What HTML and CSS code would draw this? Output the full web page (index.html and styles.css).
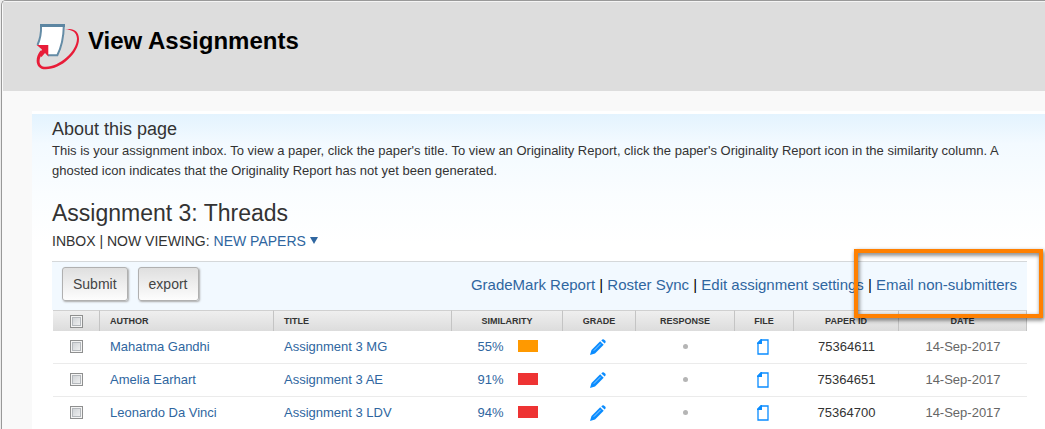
FILE: index.html
```
<!DOCTYPE html>
<html lang="en">

<head>
    <meta charset="utf-8">
    <meta name="viewport" content="width=device-width, initial-scale=1.0">
    <title>View Assignments</title>
    <link rel="stylesheet" href="styles.css">
</head>

<body>
    <svg class="sprite" aria-hidden="true">
        <symbol id="pencil" viewBox="0 0 16 16">
            <path d="M0 16l1.500-5L10.200 2.300l3.500 3.500L5 14.500z" fill="#0a8cff" />
            <path d="M3.800 11.700l7-7" stroke="#9fd3ff" stroke-width=".9" />
            <path d="M11.300 1.500Q13-.5 14.500 1Q16.800 2.500 14.700 4.500z" fill="#0a8cff" />
        </symbol>
        <symbol id="file" viewBox="0 0 12 16">
            <path d="M4 1H11V15H1V4z" fill="#fff" stroke="#0a8cff" stroke-width="1.300" />
            <path d="M0 5V4l4-4h1v5z" fill="#0a8cff" />
        </symbol>
    </svg>

    <div class="page">
        <header class="header">
            <svg class="logo" viewBox="0 0 44 46" aria-hidden="true">
                <path d="M5 1.500H28Q28 18 21.500 31.500H12L2 20.500Q5.500 12 5 1.500z" fill="#fff" />
                <path d="M1.500 21Q5.500 12 5 2H27.800Q27.500 19 21.300 31.300H12" fill="none" stroke="#648ca6" stroke-width="2" />
                <path d="M4 1.500H29" stroke="#5c86a2" stroke-width="3" />
                <path d="M29 5.500C37 3.500 43 7 43 15C43 29 25 45.500 9.500 45.300C-1 45 -1.500 34 4.500 26.500L7 28.500C2 35 2 43 10 42.800C23 42.500 41 28 41 14.500C40.500 8 36 5.500 29 5.500z" fill="#e81c38" />
                <path d="M.7 21H12.300V32.500L9 29L5.500 33L3 31L6 25.500z" fill="#e81c38" />
            </svg>
            <h1>View Assignments</h1>
        </header>

        <main class="content">
            <h3>About this page</h3>
            <p>This is your assignment inbox. To view a paper, click the paper's title. To view an Originality Report, click the paper's Originality Report icon in the similarity column. A ghosted icon indicates that the Originality Report has not yet been generated.</p>

            <h2>Assignment 3: Threads</h2>
            <div class="viewing">INBOX | NOW VIEWING: <a href="#">NEW PAPERS <span class="arrow"></span></a></div>

            <div class="inbox">
                <div class="toolbar">
                    <button type="button">Submit</button>
                    <button type="button">export</button>
                    <nav class="links">
                        <a href="#">GradeMark Report</a> | <a href="#">Roster Sync</a> | <a href="#">Edit assignment settings</a> | <a href="#">Email non-submitters</a>
                    </nav>
                    <div class="highlight"></div>
                </div>

                <table>
                    <thead>
                        <tr>
                            <th class="check"><input type="checkbox" aria-label="Select all papers"></th>
                            <th class="author">Author</th>
                            <th class="title">Title</th>
                            <th class="similarity">Similarity</th>
                            <th class="grade">Grade</th>
                            <th class="response">Response</th>
                            <th class="file">File</th>
                            <th class="paper">Paper ID</th>
                            <th class="date">Date</th>
                        </tr>
                    </thead>
                    <tbody>
                        <tr>
                            <td><input type="checkbox" aria-label="Select Mahatma Gandhi"></td>
                            <td class="left"><a href="#">Mahatma Gandhi</a></td>
                            <td class="left"><a href="#">Assignment 3 MG</a></td>
                            <td><a href="#" class="score">55% <span class="bar orange"></span></a></td>
                            <td class="icon"><a href="#" aria-label="Grade"><svg class="pencil"><use href="#pencil" /></svg></a></td>
                            <td><span class="dot"></span></td>
                            <td class="icon"><a href="#" aria-label="File"><svg class="doc"><use href="#file" /></svg></a></td>
                            <td>75364611</td>
                            <td class="grey">14-Sep-2017</td>
                        </tr>
                        <tr>
                            <td><input type="checkbox" aria-label="Select Amelia Earhart"></td>
                            <td class="left"><a href="#">Amelia Earhart</a></td>
                            <td class="left"><a href="#">Assignment 3 AE</a></td>
                            <td><a href="#" class="score">91% <span class="bar red"></span></a></td>
                            <td class="icon"><a href="#" aria-label="Grade"><svg class="pencil"><use href="#pencil" /></svg></a></td>
                            <td><span class="dot"></span></td>
                            <td class="icon"><a href="#" aria-label="File"><svg class="doc"><use href="#file" /></svg></a></td>
                            <td>75364651</td>
                            <td class="grey">14-Sep-2017</td>
                        </tr>
                        <tr>
                            <td><input type="checkbox" aria-label="Select Leonardo Da Vinci"></td>
                            <td class="left"><a href="#">Leonardo Da Vinci</a></td>
                            <td class="left"><a href="#">Assignment 3 LDV</a></td>
                            <td><a href="#" class="score">94% <span class="bar red"></span></a></td>
                            <td class="icon"><a href="#" aria-label="Grade"><svg class="pencil"><use href="#pencil" /></svg></a></td>
                            <td><span class="dot"></span></td>
                            <td class="icon"><a href="#" aria-label="File"><svg class="doc"><use href="#file" /></svg></a></td>
                            <td>75364700</td>
                            <td class="grey">14-Sep-2017</td>
                        </tr>
                    </tbody>
                </table>
            </div>
        </main>
    </div>
</body>

</html>
```
FILE: styles.css
```
* {
    box-sizing: border-box;
}

body {
    margin: 0;
    padding-left: 1px;
    background-color: #ececec;
    font-family: "Liberation Sans", Arial, sans-serif;
    font-size: 13px;
    color: #333;
}

h1,
h2,
h3,
p {
    margin: 0;
}

a {
    color: #2f66a0;
    text-decoration: none;
}

a:hover {
    text-decoration: underline;
}

.sprite {
    display: none;
}

.page {
    min-height: 100vh;
    border-left: 1px solid #999;
    border-top: 1px solid #999;
    border-top-left-radius: 5px;
    background-color: #f9f9f9;
    padding-left: 1px;
    overflow: hidden;
}

.header {
    display: flex;
    align-items: center;
    gap: 8px;
    height: 90px;
    padding-left: 33px;
    border-top: 1px solid #f4f4f4;
    background-color: #ddd;
}

.logo {
    width: 44px;
    height: 46px;
}

h1 {
    font-size: 24px;
    line-height: 28px;
    color: #000;
    margin-bottom: 12px;
}

.content {
    margin: 20px 0 0 29px;
    padding: 3px 18px 0 20px;
    border-top: 3px solid #fff;
    background: #fff linear-gradient(#e3f3fe, #f3faff 30px, #fafdff 80px, #fff 130px) no-repeat;
}

h3 {
    font-size: 18px;
    line-height: 24px;
    font-weight: normal;
}

.content p {
    line-height: 20px;
}

h2 {
    margin-top: 18px;
    font-size: 23px;
    line-height: 28px;
    font-weight: normal;
}

.viewing {
    margin-top: 4px;
    font-size: 14px;
    line-height: 20px;
}

.arrow {
    display: inline-block;
    border: 4px solid transparent;
    border-top: 7px solid #2f66a0;
    border-bottom: 0;
    vertical-align: 2px;
}

.inbox {
    margin-top: 10px;
}

.toolbar {
    position: relative;
    display: flex;
    align-items: center;
    gap: 10px;
    height: 49px;
    padding: 0 10px 4px;
    border-top: 1px solid #d5d8da;
    background-color: #f2f9ff;
}

.toolbar button {
    height: 34px;
    padding: 0 10px;
    border: 1px solid #b0b0b0;
    border-radius: 3px;
    background: linear-gradient(#dfdfdf, #fdfdfd);
    box-shadow: 1px 1px 2px #aaa;
    font-family: inherit;
    font-size: 14px;
    color: #444;
    cursor: pointer;
}

.links {
    margin-left: auto;
    font-size: 15px;
    color: #000;
}

.highlight {
    position: absolute;
    top: -13px;
    right: -16px;
    width: 189px;
    height: 69px;
    border: 4px solid #ff8000;
    filter: drop-shadow(1px 2px 2px rgba(0, 0, 0, 0.6));
    pointer-events: none;
}

table {
    width: 100%;
    table-layout: fixed;
    border-collapse: separate;
    border-spacing: 0;
    border-left: 1px solid #fff;
}

th {
    height: 21px;
    padding: 0;
    border-top: 1px solid #d0d0d0;
    border-right: 1px solid #c4c4c4;
    background: linear-gradient(#efefef, #dcdcdc);
    font-size: 9px;
    text-transform: uppercase;
}

td {
    height: 33px;
    padding: 0 0 2px;
    border-bottom: 1px solid #ebebeb;
    text-align: center;
}

.check {
    width: 47px;
}

.author {
    width: 174px;
}

.author,
.title,
.left {
    padding-left: 10px;
    text-align: left;
}

.similarity {
    width: 111px;
}

.grade {
    width: 73px;
}

.response {
    width: 99px;
}

.file {
    width: 59px;
}

.paper {
    width: 105px;
}

.date {
    width: 128px;
}

.icon {
    padding: 0 3px 0 0;
}

input[type="checkbox"] {
    appearance: none;
    display: block;
    width: 13px;
    height: 13px;
    margin: 0 auto;
    border: 1px solid #8e8f8f;
    background: linear-gradient(135deg, #c8ccd0, #f6f6f6);
    box-shadow: inset 0 0 0 1px #f4f4f4, inset 0 0 0 2px #b4b8bc;
}

input[type="checkbox"]:checked {
    background: #2f66a0;
}

.score {
    display: flex;
    justify-content: center;
    align-items: center;
    gap: 14px;
}

.bar {
    width: 20px;
    height: 12px;
}

.orange {
    background-color: #f90;
}

.red {
    background-color: #e33;
}

.pencil,
.doc {
    display: block;
    width: 16px;
    height: 16px;
    margin: 0 auto;
}

.doc {
    width: 12px;
}

.dot {
    display: block;
    width: 5px;
    height: 5px;
    margin: 0 auto;
    border-radius: 50%;
    background-color: #b5b5b5;
}

.grey {
    color: #666;
}
```
